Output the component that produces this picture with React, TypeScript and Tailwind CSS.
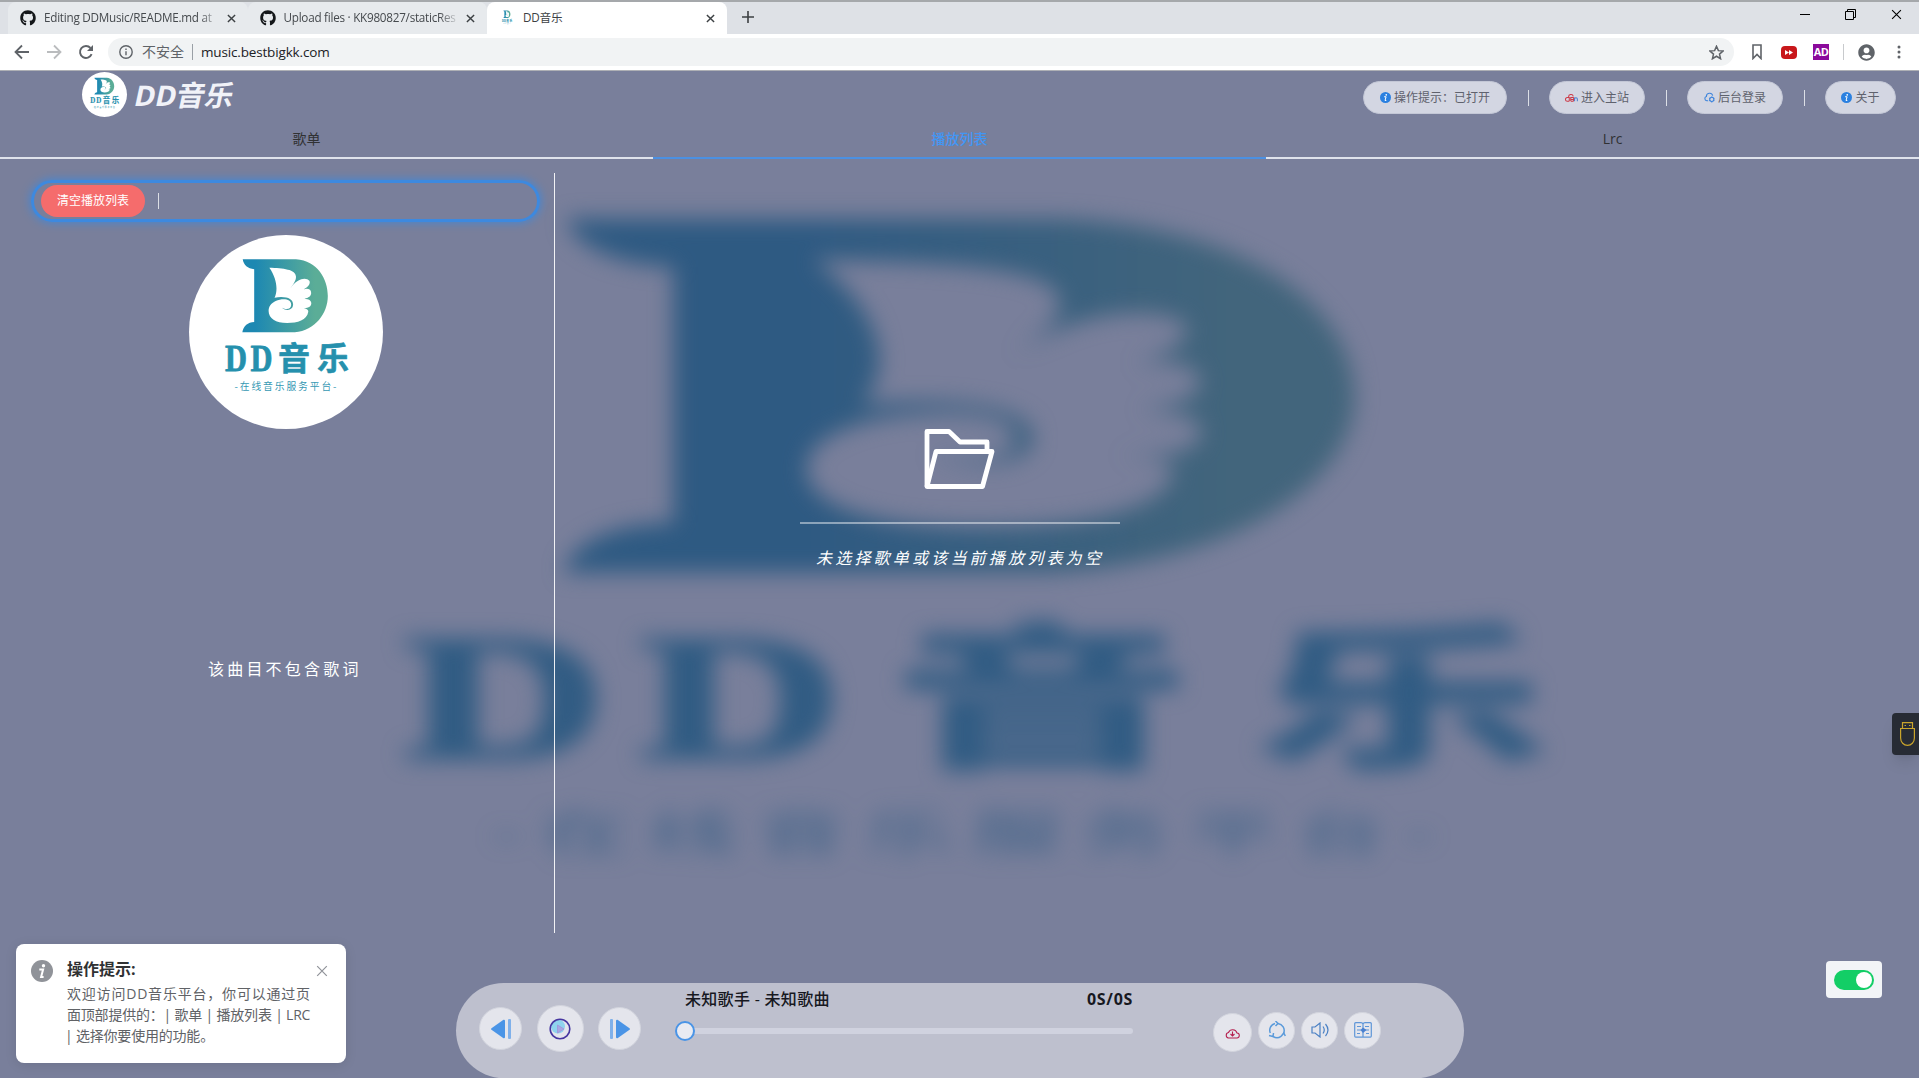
import React, { useId } from "react";
import { FaGithub, FaUserCircle } from "react-icons/fa";

const SANS = "font-['Open_Sans','Noto_Sans_CJK_SC',sans-serif]";

function LogoArt({ className, soft }: { className?: string; soft?: boolean }) {
  const id = useId();
  const from = soft ? "#2e5a82" : "#1d88b2";
  const to = soft ? "#42657c" : "#5bad97";
  const ink = soft ? "#315c83" : "#2590ad";
  return (
    <svg viewBox="0 0 194 194" preserveAspectRatio="none" className={className}>
      <defs>
        <linearGradient id={id} x1="0" x2="1" y1="0" y2="0">
          <stop offset={soft ? "0.3" : "0.15"} stopColor={from} />
          <stop offset="0.85" stopColor={to} />
        </linearGradient>
      </defs>
      <path
        transform="matrix(0.37 0 0 0.3333 -189 -75)"
        fill={`url(#${id})`}
        fillRule="evenodd"
        d="M656 298H800C858 303 886 357 886 408C886 460 852 511 797 517H655C658 497 670 487 687 486V328C670 326 658 315 656 298ZM728 323C748 355 752 390 742 413C775 407 794 417 792 436C791 450 775 455 762 443C776 451 787 446 787 434C787 417 765 414 745 423C732 430 726 440 726 453C726 475 745 489 776 489C804 489 830 480 833 456C834 449 830 446 816 444C832 446 839 442 841 433C843 422 836 417 823 416C834 414 841 408 841 399C841 388 832 384 821 388C833 382 840 370 836 362C828 352 805 352 784 386C793 372 800 362 800 350C800 327 765 325 728 323Z"
      />
      <g fill={ink} stroke={ink} strokeLinejoin="round" fontWeight="700">
        <g fontSize="37" strokeWidth="0.8" fontFamily="Liberation Serif, serif">
          <text x="36" y="135.500" textLength="22" lengthAdjust="spacingAndGlyphs">
            D
          </text>
          <text x="61.500" y="135.500" textLength="22" lengthAdjust="spacingAndGlyphs">
            D
          </text>
        </g>
        <text x="89" y="135" fontSize="32" strokeWidth="0.6" textLength="71" fontFamily="Noto Sans CJK SC, sans-serif">
          音乐
        </text>
      </g>
      <text
        x="45.500"
        y="154.500"
        fontSize="9.800"
        fill={ink}
        fillOpacity={soft ? 0.75 : 0.95}
        textLength="102"
        fontFamily="Noto Sans CJK SC, sans-serif"
      >
        -在线音乐服务平台-
      </text>
    </svg>
  );
}

function Cross({ className }: { className: string }) {
  return (
    <svg viewBox="0 0 10 10" className={className} fill="none" stroke="currentColor">
      <path d="M1 1l8 8M9 1l-8 8" />
    </svg>
  );
}

function BrowserTab({ icon, title, active }: { icon: React.ReactNode; title: string; active?: boolean }) {
  return (
    <div className={`flex h-8 w-[239.500px] items-center rounded-t-lg pl-3 pr-2 ${active ? "bg-white" : "bg-[#e7eaed]"}`}>
      <span className="flex size-4 shrink-0 items-center justify-center text-[#14171a]">{icon}</span>
      <span
        className={`mb-0.5 ml-2 flex-1 overflow-hidden whitespace-nowrap text-[11.700px] leading-4 tracking-[-0.250px] ${
          active ? "text-[#3c4043]" : "text-[#45494d] [mask-image:linear-gradient(to_right,black_88%,transparent)]"
        }`}
      >
        {title}
      </span>
      <Cross className="ml-1.5 mr-1 size-[9px] shrink-0 stroke-[1.600] text-[#3c4043]" />
    </div>
  );
}

function Chrome() {
  return (
    <div className="relative z-10 shrink-0 border-b border-[#aeb0b5]">
      <div className="flex h-[34px] items-end border-t-2 border-[#a5a8ab] bg-[#dee1e6] pl-2">
        <BrowserTab icon={<FaGithub size={16} />} title="Editing DDMusic/README.md at" />
        <BrowserTab icon={<FaGithub size={16} />} title="Upload files · KK980827/staticRes" />
        <BrowserTab active icon={<LogoArt className="h-5 w-5" />} title="DD音乐" />
        <svg viewBox="0 0 12 12" className="mb-[11px] ml-[15px] size-3" stroke="#3c4043" strokeWidth="1.6">
          <path d="M6 0v12M0 6h12" />
        </svg>
        <div className="mb-3.5 ml-auto mr-[17px] flex items-center gap-[35px] text-black">
          <span className="h-px w-2.5 bg-black" />
          <svg viewBox="0 0 11 11" className="size-[11px]" fill="none" stroke="currentColor">
            <path d="M.5 2.500h8v8h-8zM2.500 2.500v-2h8v8h-2" />
          </svg>
          <Cross className="size-[11px]" />
        </div>
      </div>
      <div className="flex h-9 items-center bg-white pl-3.5 pr-[18px]">
        <div className="flex items-center gap-4">
          <svg viewBox="0 0 16 16" className="size-4" fill="none" stroke="#5f6368" strokeWidth="1.800">
            <path d="M15 8H2M8 1.500L1.500 8 8 14.500" />
          </svg>
          <svg viewBox="0 0 16 16" className="size-4" fill="none" stroke="#babcbe" strokeWidth="1.800">
            <path d="M1 8h13M8 1.500L14.500 8 8 14.500" />
          </svg>
          <svg viewBox="0 0 16 16" className="size-4" fill="none" stroke="#5f6368" strokeWidth="1.900">
            <path d="M13.600 10.200A6 6 0 1 1 12.500 4" />
            <path d="M15 1v6H9z" fill="#5f6368" stroke="none" />
          </svg>
        </div>
        <div className="ml-[14px] flex h-7 flex-1 items-center rounded-full bg-[#f1f3f4] pl-[11px] pr-2.5">
          <svg viewBox="0 0 14 14" className="size-3.5" fill="none" stroke="#5f6368" strokeWidth="1.400">
            <circle cx="7" cy="7" r="6.200" />
            <path d="M7 6.200v4M7 3.400v1.500" />
          </svg>
          <span className="ml-[9px] text-[14px] leading-5 text-[#5f6368]">不安全</span>
          <span className="mx-[8px] h-4 w-px bg-[#9aa0a6]" />
          <span className="text-[13.500px] leading-5 tracking-[-0.160px] text-[#202124]">music.bestbigkk.com</span>
          <svg viewBox="0 0 24 24" className="ml-auto size-[15px]" fill="none" stroke="#5f6368" strokeWidth="2.400">
            <path d="M12 2l3 7 7.500.6-5.700 5 1.700 7.400L12 18l-6.500 4 1.700-7.400-5.700-5L9 9z" />
          </svg>
        </div>
        <div className="ml-[18px] flex items-center">
          <svg viewBox="0 0 10 16" className="h-4 w-2.5" fill="none" stroke="#5f6368" strokeWidth="1.600">
            <path d="M1 1h8v13.500l-4-4-4 4z" />
          </svg>
          <svg viewBox="0 0 16 13" className="ml-[19px] h-[13px] w-4">
            <rect width="16" height="13" rx="4" fill="#c8171b" />
            <path d="M4 4L8 6.500 4 9zM8 4L12 6.500 8 9z" fill="#fff" />
          </svg>
          <span className="ml-4 flex size-4 items-center justify-center bg-[#8b0a9b] text-[11px] font-bold leading-4 tracking-tighter text-white">
            AD
          </span>
          <span className="ml-3.5 h-4 w-px bg-[#c8cacd]" />
          <FaUserCircle size={17} className="ml-3.5 text-[#5f6368]" />
          <svg viewBox="0 0 4 14" className="ml-[22px] h-3.5 w-1" fill="#5f6368">
            <circle cx="2" cy="2" r="1.500" />
            <circle cx="2" cy="7" r="1.500" />
            <circle cx="2" cy="12" r="1.500" />
          </svg>
        </div>
      </div>
    </div>
  );
}

function InfoDot({ className }: { className: string }) {
  return (
    <svg viewBox="0 0 22 22" className={className}>
      <circle cx="11" cy="11" r="11" fill="currentColor" />
      <circle cx="12.500" cy="5.700" r="1.700" fill="#fff" />
      <path d="M8.300 9.500h3.800l-2 7.500h2.500" fill="none" stroke="#fff" strokeWidth="2" />
    </svg>
  );
}

function SiteIcon() {
  return (
    <svg viewBox="0 0 14 12" className="h-3 w-[13px]" fill="none" strokeWidth="1.100">
      <path
        d="M4.500 9.500H2.600a2 2 0 0 1-.2-4H4.600V9.500M4 5.200a2.500 2.500 0 0 1 4.900-1M6.200 9.300V5.500H8.500a1 1 0 0 1 0 2H6.500M8.500 7.500a1 1 0 0 1 0 2H6.200"
        stroke="#cc3a48"
      />
      <path d="M10.300 9.500V5.500M10.300 7.200a1.500 1.500 0 0 1 3 0v2.300" stroke="#4a7fd0" />
    </svg>
  );
}

function CloudLoginIcon() {
  return (
    <svg viewBox="0 0 12 12" className="size-[11px]" fill="none" stroke="#3d84dc" strokeWidth="1.200">
      <path d="M4.500 9.500H3a2.300 2.300 0 0 1-.4-4.500A3.500 3.500 0 0 1 9.500 4" />
      <circle cx="8.500" cy="8" r="2.300" />
      <path d="M8.500 4.800v1.200M8.500 10v1.500M5.800 6.500l1 .6M11.200 6.500l-1 .6M5.800 9.700l1-.6M11.200 9.700l-1-.6" />
    </svg>
  );
}

function HeaderPill({ icon, label, width }: { icon: React.ReactNode; label: string; width: string }) {
  return (
    <button
      className={`flex h-[33px] items-center justify-center gap-[3px] rounded-full border border-[#c3c7d6] bg-[#d3d6e2] text-[12px] leading-4 text-[#5f626d] ${width}`}
    >
      {icon}
      <span className="whitespace-nowrap">{label}</span>
    </button>
  );
}

function Divider() {
  return <span className="h-4 w-px bg-[#dcdfe6]" />;
}

function Header() {
  return (
    <header className="flex h-[47px] items-center justify-between pl-[82px] pr-[23px]">
      <div className="flex items-center gap-2">
        <div className="size-[45px] rounded-full bg-white">
          <LogoArt className="size-full" />
        </div>
        <h1 className="-skew-x-12 text-[28.500px] font-bold leading-9 text-[#f1f2f8]">DD音乐</h1>
      </div>
      <div className="flex items-center gap-[20.500px] pt-1.5">
        <HeaderPill
          width="w-[144px]"
          icon={<InfoDot className="size-[11px] text-[#2a80e0]" />}
          label="操作提示：已打开"
        />
        <Divider />
        <HeaderPill width="w-[96px]" icon={<SiteIcon />} label="进入主站" />
        <Divider />
        <HeaderPill width="w-[96px]" icon={<CloudLoginIcon />} label="后台登录" />
        <Divider />
        <HeaderPill width="w-[71px]" icon={<InfoDot className="size-[11px] text-[#2a80e0]" />} label="关于" />
      </div>
    </header>
  );
}

function NavTabs() {
  return (
    <nav className="grid h-[41px] grid-cols-3 gap-x-10 border-b-2 border-[#dfe3ec] text-center text-[14px] leading-[41px] text-[#303133]">
      <div>歌单</div>
      <div className="h-[41px] border-b-2 border-[#4b90e2] font-medium text-[#4296f4]">播放列表</div>
      <div>Lrc</div>
    </nav>
  );
}

function LyricsPanel() {
  return (
    <aside className="flex h-[760px] w-[555px] shrink-0 flex-col border-r border-white/90">
      <div className="mr-3.5 mt-[7px] flex h-[42px] w-[509px] items-center self-end rounded-full border-[3px] border-[#3d89df] pl-[7px] shadow-[0_0_8px_1px_#4787d2]">
        <button className="h-8 w-[104px] rounded-full bg-[#f56c6c] text-[12px] leading-8 text-white">清空播放列表</button>
        <span className="ml-[13px] h-4 w-px bg-[#dcdfe6]" />
      </div>
      <div className="ml-[189px] mt-[13px] size-[194px] overflow-hidden rounded-full bg-white">
        <LogoArt className="size-full" />
      </div>
      <p className="ml-[208px] mt-[228px] whitespace-nowrap text-[16px] leading-6 tracking-[3.200px] text-white">
        该曲目不包含歌词
      </p>
    </aside>
  );
}

function EmptyPlaylist() {
  return (
    <section className="flex flex-1 flex-col items-start pl-[245px] pt-[256px]">
      <div className="flex w-80 flex-col items-center">
        <svg
          viewBox="0 0 71 60"
          className="mr-0.5 h-[60px] w-[71px]"
          fill="none"
          stroke="#fff"
          strokeWidth="4.800"
          strokeLinejoin="round"
        >
          <path d="M3 57.500V2.500h22L36 13h27v9" />
          <path d="M3 57.500L12 22.500h56l-9.500 35z" />
        </svg>
        <div className="mt-[33px] h-0.5 w-full bg-white/45" />
        <p className="mt-[22px] whitespace-nowrap text-[16px] italic leading-6 tracking-[3.200px] text-white">
          未选择歌单或该当前播放列表为空
        </p>
      </div>
    </section>
  );
}

function RoundButton({ className, children }: { className: string; children: React.ReactNode }) {
  return (
    <button
      className={`flex shrink-0 items-center justify-center rounded-full border border-[#d3d5de] bg-[#e4e5ec] ${className}`}
    >
      {children}
    </button>
  );
}

function Player() {
  return (
    <footer className="ml-[456px] mt-auto flex h-[95px] w-[1008px] rounded-full bg-[#bec0ce] pl-[23px]">
      <div className="flex h-[91px] items-center gap-[14.500px]">
        <RoundButton className="size-[43px]">
          <svg viewBox="0 0 20 20" className="size-5">
            <path d="M0.500 9.200L12.500 0.800Q14 0.500 14 2V18Q14 19.500 12.500 19.200L0.500 10.800Q-.5 10 .5 9.200Z" fill="#4a94e6" />
            <rect x="17" width="3" height="20" rx="1" fill="#7fb0ea" />
          </svg>
        </RoundButton>
        <RoundButton className="size-[47px]">
          <svg viewBox="0 0 22 22" className="size-[22px]">
            <circle cx="9" cy="8.500" r="7" fill="#8fd3ee" />
            <circle cx="11" cy="11" r="9.800" fill="none" stroke="#4636a0" strokeWidth="1.600" />
            <path d="M8.500 7l6.500 4-6.500 4z" fill="#a9a6e2" stroke="#a09ade" strokeLinejoin="round" />
          </svg>
        </RoundButton>
        <RoundButton className="size-[43px]">
          <svg viewBox="0 0 20 20" className="size-5">
            <rect width="3" height="20" rx="1" fill="#7fb0ea" />
            <path d="M19.500 9.200L7.500 0.800Q6 0.500 6 2V18Q6 19.500 7.500 19.200L19.500 10.800Q20.500 10 19.500 9.200Z" fill="#4a94e6" />
          </svg>
        </RoundButton>
      </div>
      <div className="ml-[44px] w-[448px] pt-1">
        <div className="flex justify-between text-[16px] font-medium leading-6 text-[#17181f]">
          <span className="tracking-[0.300px]">未知歌手 - 未知歌曲</span>
          <span className="font-bold tracking-[0.700px]">0S/0S</span>
        </div>
        <div className="mt-[17px] flex h-1.5 items-center rounded-full bg-[#d0d2df]">
          <span className="-ml-2.5 size-5 rounded-full border-2 border-[#4a94e6] bg-[#e9ebf2]" />
        </div>
      </div>
      <div className="ml-20 flex h-[95px] items-center gap-1.5">
        <RoundButton className="mt-1 size-[39px]">
          <svg viewBox="0 0 15 12" className="h-3 w-[15px]" fill="none" stroke="#b5204f" strokeWidth="1.100">
            <path d="M5 11H3.500A2.800 2.800 0 0 1 3.500 5.500A4.500 4.500 0 0 1 12 6a2.500 2.500 0 0 1-.5 5H10" />
            <path d="M5 11h5M7.500 4.500v4.500M5.500 7l2 2 2-2" />
          </svg>
        </RoundButton>
        <RoundButton className="mb-px size-[37px]">
          <svg viewBox="0 0 18 18" className="size-[18px]" fill="none" stroke="#5a9ada" strokeWidth="1.500">
            <path d="M7 2.500A7 7 0 0 0 2.300 12M5 15.400A7 7 0 0 0 13 15.400M15.700 12A7 7 0 0 0 10 2.500" />
            <path d="M7.500 0l2.500 2.500L7.500 5M1 14.500l4 1 .5-3.500M13 15.500l2.800-3.500 1.500 3" />
          </svg>
        </RoundButton>
        <RoundButton className="mb-px size-[37px]">
          <svg viewBox="0 0 18 16" className="h-4 w-[18px]" fill="none" stroke="#4a80c4" strokeWidth="1.200">
            <path d="M1 5h3l5-4v14l-5-4H1zM12 4.500q2.500 3.500 0 7M14.500 2q5 6 0 12" />
          </svg>
        </RoundButton>
        <RoundButton className="mb-px size-[37px]">
          <svg viewBox="0 0 18 16" className="h-4 w-[18px]" fill="none" stroke="#5f96d8" strokeWidth="1.200">
            <path d="M9 2V15M9 2Q8.500 .7 7 .7H1.700Q.7.7.7 1.700V14Q.7 15.200 1.700 15.200H16.300Q17.300 15.200 17.300 14V1.700Q17.300.7 16.300.7H11Q9.500.7 9 2M3 4.500h4M3 8h4M3 11.500h3M11 4.500h4M11 8h4M12 11.500h3" />
            <path d="M6.500 8L9 5.500 12.500 8 9 11z" fill="#4a80d0" stroke="none" />
          </svg>
        </RoundButton>
      </div>
    </footer>
  );
}

function Toast() {
  return (
    <div className="absolute bottom-[15px] left-4 flex h-[119px] w-[330px] rounded-lg bg-white pl-[15px] pr-[18px] pt-4 shadow-[0_2px_12px_rgba(0,0,0,0.1)]">
      <InfoDot className="size-[22px] shrink-0 text-[#909399]" />
      <div className="-mt-px ml-[14px] w-[245px]">
        <h2 className="text-[16px] font-bold leading-5 text-[#303133]">操作提示:</h2>
        <div className="mt-1 whitespace-nowrap text-[14px] leading-[21px] text-[#606266]">
          <p className="tracking-[0.800px]">欢迎访问DD音乐平台，你可以通过页</p>
          <p className="tracking-[-0.200px]">面顶部提供的：| 歌单 | 播放列表 | LRC</p>
          <p className="-ml-0.5 tracking-[-0.200px]">| 选择你要使用的功能。</p>
        </div>
      </div>
      <Cross className="ml-auto mt-[5px] size-3 shrink-0 text-[#909399]" />
    </div>
  );
}

export default function App() {
  return (
    <div className={`flex h-[1078px] w-full flex-col overflow-hidden bg-[#797f9b] ${SANS}`}>
      <Chrome />
      <main className="relative flex flex-1 flex-col overflow-hidden">
        <div className="pointer-events-none absolute left-[70px] top-[30px] blur-[11px]">
          <LogoArt soft className="h-[940px] w-[1795px]" />
        </div>
        <div className="relative flex flex-1 flex-col">
          <Header />
          <NavTabs />
          <div className="flex pt-[14px]">
            <LyricsPanel />
            <EmptyPlaylist />
          </div>
          <Player />
        </div>
        <div className="absolute right-0 top-[642px] flex h-[42px] w-[27px] items-center rounded-l bg-[#272b34] pl-2 shadow-lg">
          <svg viewBox="0 0 15 24" className="h-6 w-[15px]" fill="none" stroke="#c9a42c" strokeWidth="1.200">
            <path d="M.6 6.500H14.400V16A6.900 7.400 0 0 1 .6 16zM2.500 6.500V.6h10v5.900" />
            <path d="M4.500 3.500h1.500M9 3.500h1.500" />
          </svg>
        </div>
        <div className="absolute bottom-[80px] right-[37px] flex h-[37px] w-14 items-center justify-center rounded bg-[#f2f4f7]">
          <div className="flex h-5 w-10 items-center justify-end rounded-full bg-[#13ce66] pr-0.5">
            <span className="size-4 rounded-full bg-white" />
          </div>
        </div>
        <Toast />
      </main>
    </div>
  );
}
